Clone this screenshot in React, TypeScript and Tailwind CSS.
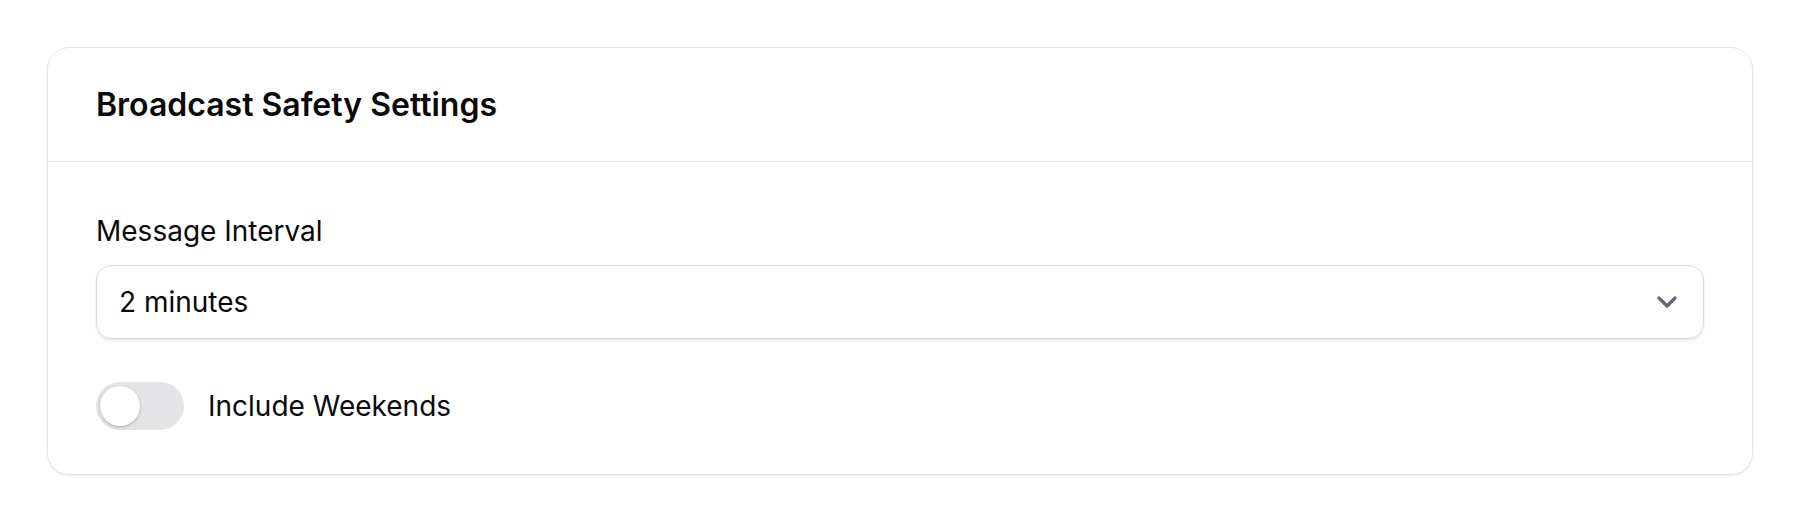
import { useState } from 'react'

export default function App() {
  const [weekends, setWeekends] = useState(false)
  const [interval, setInterval] = useState('2')

  return (
    <div className="min-h-screen bg-white px-[47px] pt-[47px] pb-12 font-['Inter',sans-serif] text-[#0a0a0a]">
      <div className="rounded-[22px] border border-[#e4e4e7] bg-white shadow-[0_2px_3px_rgba(0,0,0,0.06)]">
        {/* header */}
        <div className="border-b border-[#e4e4e7] px-12 pt-9 pb-[35px]">
          <h2 className="text-[32px] font-semibold leading-[42px]">Broadcast Safety Settings</h2>
        </div>

        {/* body */}
        <div className="px-12 pt-[51px] pb-[44px]">
          <label className="mb-4 block text-[28px] font-normal leading-[36px]">Message Interval</label>
          <div className="relative">
            <select
              value={interval}
              onChange={e => setInterval(e.target.value)}
              className="h-[74px] w-full appearance-none rounded-[15px] border border-[#d9d9dc] bg-white px-[22px] text-[28px] shadow-[0_2px_3px_rgba(0,0,0,0.08)] outline-none"
            >
              <option value="1">1 minute</option>
              <option value="2">2 minutes</option>
              <option value="5">5 minutes</option>
              <option value="10">10 minutes</option>
            </select>
            <svg
              className="pointer-events-none absolute right-[27px] top-1/2 -translate-y-1/2"
              width="20"
              height="12"
              viewBox="0 0 20 12"
              fill="none"
            >
              <path d="M2 2l8 8 8-8" stroke="#5f6776" strokeWidth="3.2" strokeLinecap="round" strokeLinejoin="round" />
            </svg>
          </div>

          <div className="mt-[43px] flex items-center gap-6">
            <button
              type="button"
              onClick={() => setWeekends(v => !v)}
              className={`relative h-12 w-[88px] rounded-full transition ${weekends ? 'bg-[#18181b]' : 'bg-[#e4e4e7]'}`}
            >
              <span
                className={`absolute top-1 left-1 h-10 w-10 rounded-full bg-white shadow-[0_1px_3px_rgba(0,0,0,0.25)] transition ${weekends ? 'translate-x-10' : ''}`}
              />
            </button>
            <span className="text-[28px] font-normal leading-[36px]">Include Weekends</span>
          </div>
        </div>
      </div>
    </div>
  )
}
